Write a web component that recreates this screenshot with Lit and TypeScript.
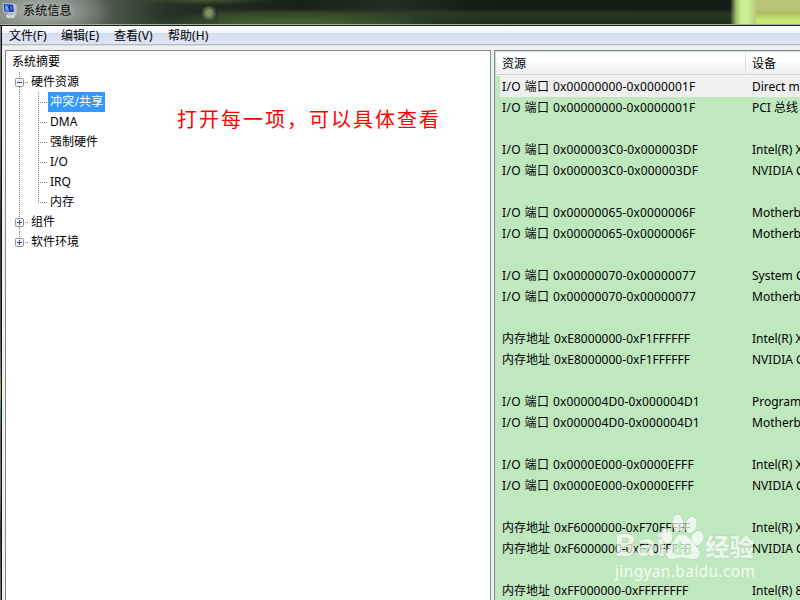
import { LitElement, html, css } from "lit";
import { customElement } from "lit/decorators.js";
import { classMap } from "lit/directives/class-map.js";

type Row = [string, string, string] | null;

const IO = "I/O 端口";
const MEM = "内存地址";
const ROWS: Row[] = [
  [IO, "0x00000000-0x0000001F", "Direct memory access controller"],
  [IO, "0x00000000-0x0000001F", "PCI 总线"],
  null,
  [IO, "0x000003C0-0x000003DF", "Intel(R) Xeon(R) processor"],
  [IO, "0x000003C0-0x000003DF", "NVIDIA GeForce"],
  null,
  [IO, "0x00000065-0x0000006F", "Motherboard resources"],
  [IO, "0x00000065-0x0000006F", "Motherboard resources"],
  null,
  [IO, "0x00000070-0x00000077", "System CMOS/real time clock"],
  [IO, "0x00000070-0x00000077", "Motherboard resources"],
  null,
  [MEM, "0xE8000000-0xF1FFFFFF", "Intel(R) Xeon(R) processor"],
  [MEM, "0xE8000000-0xF1FFFFFF", "NVIDIA GeForce"],
  null,
  [IO, "0x000004D0-0x000004D1", "Programmable interrupt controller"],
  [IO, "0x000004D0-0x000004D1", "Motherboard resources"],
  null,
  [IO, "0x0000E000-0x0000EFFF", "Intel(R) Xeon(R) processor"],
  [IO, "0x0000E000-0x0000EFFF", "NVIDIA GeForce"],
  null,
  [MEM, "0xF6000000-0xF70FFFFF", "Intel(R) Xeon(R) processor"],
  [MEM, "0xF6000000-0xF70FFFFF", "NVIDIA GeForce"],
  null,
  [MEM, "0xFF000000-0xFFFFFFFF", "Intel(R) 82802 Firmware Hub"],
];

@customElement("info-tree")
class InfoTree extends LitElement {
  static styles = css`
    :host { display: block; padding: 1px 0 0 0; }
    .row { display: flex; height: 20px; align-items: flex-start; font-size: 12px; line-height: 20px; white-space: nowrap; }
    .root { padding-left: 6px; }
    svg { display: block; flex: none; }
    .label { padding: 0 2px; height: 20px; line-height: 19px; }
    .sel { background: #3399ff; color: #fff; letter-spacing: 0.2px; }
  `;

  branch(kind: "minus" | "plus", last: boolean) {
    return html`<svg width="23" height="20" viewBox="0 0 23 20" shape-rendering="crispEdges">
      <path d=${last ? "M13.5 0V6" : "M13.5 0V6M13.5 15V20"} stroke="#808080" stroke-dasharray="1 1"/>
      <path d="M19 10.5H22" stroke="#808080" stroke-dasharray="1 1"/>
      <g shape-rendering="auto"><rect x="9.500" y="6.500" width="8" height="8" rx="1" fill="#f4f4f6" stroke="#919191"/></g>
      <path d=${kind === "plus" ? "M11 10.5H16M13.5 8V13" : "M11 10.5H16"} stroke="#3a4f9e"/>
    </svg>`;
  }

  leaf(last: boolean) {
    return html`<svg width="42" height="20" viewBox="0 0 42 20" shape-rendering="crispEdges">
      <path d="M13.5 0V20" stroke="#808080" stroke-dasharray="1 1"/>
      <path d=${last ? "M32.5 0V11" : "M32.5 0V20"} stroke="#808080" stroke-dasharray="1 1"/>
      <path d="M34 10.500H42" stroke="#808080" stroke-dasharray="1 1"/>
    </svg>`;
  }

  render() {
    const leaves = ["冲突/共享", "DMA", "强制硬件", "I/O", "IRQ", "内存"];
    return html`
      <div class="row root">系统摘要</div>
      <div class="row">${this.branch("minus", false)}<span class="label">硬件资源</span></div>
      ${leaves.map((t, i) => html`<div class="row">${this.leaf(i === leaves.length - 1)}<span class=${classMap({ label: true, sel: i === 0 })}>${t}</span></div>`)}
      <div class="row">${this.branch("plus", false)}<span class="label">组件</span></div>
      <div class="row">${this.branch("plus", true)}<span class="label">软件环境</span></div>
    `;
  }
}

@customElement("resource-list")
class ResourceList extends LitElement {
  static styles = css`
    :host { display: block; background: #bfe8bf; overflow: hidden; padding: 1px 0 0 1px; }
    .head { display: flex; height: 22px; background: linear-gradient(#fff 0 45%, #f6f7f9 46%, #f1f2f4); border-bottom: 1px solid #d5d5d5; box-shadow: 0 1px #f6f6f6; }
    .head span { box-sizing: border-box; line-height: 23px; padding-left: 6px; }
    .c1 { width: 250px; border-right: 1px solid #dfe0e2; }
    .rows { padding: 1px 0 0 4px; }
    .row { display: flex; height: 21px; line-height: 21px; white-space: nowrap; padding-left: 2px; }
    .focus { background: #efefef; }
    .res { display: flex; width: 250px; flex: none; }
    .type { width: 51px; flex: none; letter-spacing: 0.4px; }
    .mem { width: 52px; letter-spacing: 0; }
    .num { letter-spacing: 0.14px; }
    .mem + .num { letter-spacing: 0.03px; }
  `;

  render() {
    return html`
      <div class="head"><span class="c1">资源</span><span class="c2">设备</span></div>
      <div class="rows">
        ${ROWS.map((r, i) => html`<div class=${classMap({ row: true, focus: i === 0 })}>${r
          ? html`<span class="res"><span class=${classMap({ type: true, mem: r[0] === MEM })}>${r[0]}</span><span class="num">${r[1]}</span></span><span>${r[2]}</span>`
          : ""}</div>`)}
      </div>
    `;
  }
}

@customElement("app-root")
class AppRoot extends LitElement {
  static styles = css`
    :host {
      display: block; position: relative; width: 800px; height: 600px; overflow: hidden;
      font: 12px/20px "Noto Sans", "Noto Sans CJK SC", sans-serif; color: #000; background: #f0f0f0;
    }
    .window { display: grid; grid-template-columns: 2px 798px; grid-template-rows: 26px 574px; height: 600px; }
    .title {
      grid-column: 1 / 3; display: flex; align-items: flex-start; box-sizing: border-box;
      border-bottom: 1px solid #172017; box-shadow: inset 0 -1px #a3aaa1;
      background:
        radial-gradient(ellipse 8px 8px at 209px 13px, #7f9663 30%, transparent),
        radial-gradient(ellipse 74px 26px at 38px 11px, rgba(160,165,160,.85) 30%, transparent),
        linear-gradient(transparent 9px, rgba(150,170,60,.3) 13px, rgba(205,245,110,.75) 20px) 756px 0 / 44px 26px no-repeat,
        linear-gradient(90deg, transparent 730px, #9cbb6c 736px, #c8ef90 741px, #c8ef90 748px, #b9c476 757px),
        radial-gradient(ellipse 150px 16px at 290px 25px, rgba(76,105,54,.75) 30%, transparent),
        linear-gradient(transparent 8px, rgba(60,85,48,.5) 14px, rgba(50,72,40,.35)) 218px 0 / 520px 26px no-repeat,
        radial-gradient(ellipse 70px 5px at 205px 0, rgba(90,115,60,.6), transparent),
        linear-gradient(90deg, #6f7770, #6a726b 80px, #465044 120px, #263026 170px, #182117 300px, #232d26 390px, #131d14 480px, #111b12);
    }
    .title svg { margin: 2px 0 0 2px; flex: none; }
    .title span { margin-left: 5px; line-height: 21px; letter-spacing: 0.2px; text-shadow: 0 0 6px #c4c9c4, 0 0 10px #b0b5b0; }
    .edge { border-right: 1px solid #111; box-sizing: border-box; background: linear-gradient(#777f78, #68736a 20%, #303a32 35%, #52605a 55%, #9db673 64%, #5d978f 66%, #5d665d 72%, #7d8077 80%, #303a32 88%, #69836b); }
    .client { display: flex; flex-direction: column; min-height: 0; min-width: 0; }
    nav { display: flex; flex: none; height: 19px; box-sizing: border-box; padding-left: 7px; background: linear-gradient(#fff, #f2f4fa 7px, #d5dcee 7px, #dfe5f4); border-bottom: 1px solid #b2bac8; line-height: 20px; }
    nav span { white-space: nowrap; width: 52px; letter-spacing: 0.05px; }
    nav .w53 { width: 53px; }
    nav .w54 { width: 54px; }
    .strip { flex: none; height: 1px; background: #cfe5cf; }
    .panes { display: flex; flex: 1; min-height: 0; padding: 4px 0 0 3px; gap: 3px; }
    .left, .right { border: 1px solid #828790; border-bottom: 0; box-sizing: border-box; overflow: hidden; }
    .left { width: 486px; flex: none; background: #fff; }
    .right { flex: 1; min-width: 0; border-right: 0; }
    .note { position: absolute; left: 177px; top: 105px; color: #f00; font-size: 20px; letter-spacing: 2px; line-height: 30px; white-space: nowrap; }
    .mark { position: absolute; left: 606px; top: 508px; }
  `;

  icon() {
    return html`<svg width="16" height="17" viewBox="0 0 16 17">
      <path d="M11 2L14 3V12.500L10 11Z" fill="#a8b4c8" stroke="#dfe4ea" stroke-width=".7"/>
      <path d="M1 1.500L11.500 2.300L12.500 10.500L2 10Z" fill="#1b38a0" stroke="#c3cde0"/>
      <path d="M3 3.500L5.500 3.500L7 9L3.500 8.500Z" fill="#7aa4f2"/>
      <path d="M8 4L10 4.500L10.500 8L8.500 7.500Z" fill="#4b78d8"/>
      <ellipse cx="8.500" cy="14" rx="4.500" ry="2.200" fill="#d6d9dc"/>
      <path d="M6 11H10.500L11 13.500H6Z" fill="#b4bcc4"/>
    </svg>`;
  }

  watermark() {
    return html`<svg class="mark" width="160" height="80" viewBox="0 0 160 80">
      <g fill="#fff" fill-opacity=".7" stroke="#9dbb9d" stroke-opacity=".4" stroke-width="1" paint-order="stroke">
        <text x="8" y="48" font-size="31" font-weight="700" textLength="52" lengthAdjust="spacingAndGlyphs">Bai</text>
        <text x="99" y="48" font-size="24" font-weight="900" textLength="49" lengthAdjust="spacingAndGlyphs">经验</text>
        <text x="9" y="69" font-size="15.500" textLength="140" stroke="none" fill-opacity=".85">jingyan.baidu.com</text>
        <ellipse cx="61" cy="28" rx="5.500" ry="7.500" transform="rotate(-15 61 28)"/>
        <ellipse cx="72" cy="15" rx="5.500" ry="8.500" transform="rotate(-4 72 15)"/>
        <ellipse cx="85" cy="17" rx="5.500" ry="8.500" transform="rotate(15 85 17)"/>
        <ellipse cx="91.500" cy="30" rx="6" ry="7.500" transform="rotate(25 91.500 30)"/>
        <path d="M76 26C70 26 69 33 64 38C57 45 60 52 68 51C74 49 79 49 84 51C94 53 97 45 90 38C84 33 83 26 76 26Z"/>
      </g>
      <text x="67" y="47" font-size="17" font-weight="700" fill="#bfe8bf" textLength="19" lengthAdjust="spacingAndGlyphs">du</text>
    </svg>`;
  }

  render() {
    return html`
      <div class="window">
        <header class="title">${this.icon()}<span>系统信息</span></header>
        <div class="edge"></div>
        <main class="client">
          <nav><span>文件(F)</span><span class="w53">编辑(E)</span><span class="w54">查看(V)</span><span>帮助(H)</span></nav>
          <div class="strip"></div>
          <div class="panes">
            <info-tree class="left"></info-tree>
            <resource-list class="right"></resource-list>
          </div>
        </main>
      </div>
      <div class="note">打开每一项，可以具体查看</div>
      ${this.watermark()}
    `;
  }
}
